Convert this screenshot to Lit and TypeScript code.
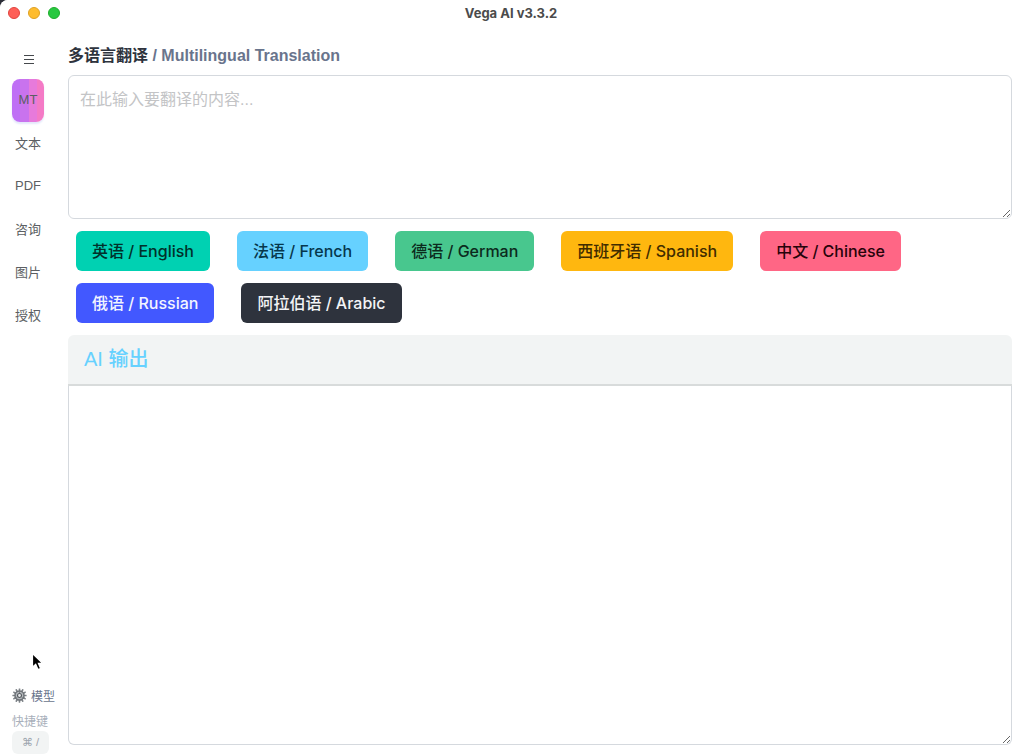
import { LitElement, html, css, svg } from "lit";
import { customElement, property, state } from "lit/decorators.js";
import { classMap } from "lit/directives/class-map.js";

interface Language {
  label: string;
  tone: string;
}

const LANGUAGES: Language[] = [
  { label: "英语 / English", tone: "primary" },
  { label: "法语 / French", tone: "info" },
  { label: "德语 / German", tone: "success" },
  { label: "西班牙语 / Spanish", tone: "warning" },
  { label: "中文 / Chinese", tone: "danger" },
  { label: "俄语 / Russian", tone: "link" },
  { label: "阿拉伯语 / Arabic", tone: "dark" },
];

const SECTIONS = ["MT", "文本", "PDF", "咨询", "图片", "授权"];

const TEETH = Array.from({ length: 12 }, (_, i) => i * 30);

@customElement("title-bar")
export class TitleBar extends LitElement {
  static styles = css`
    :host {
      display: grid;
      grid-template-columns: 1fr auto 1fr;
      align-items: center;
      height: 26px;
      padding-left: 8px;
      background: #fff;
    }
    .lights {
      display: flex;
      gap: 8px;
    }
    .light {
      box-sizing: border-box;
      width: 12px;
      height: 12px;
      padding: 0;
      border: 1px solid;
      border-radius: 50%;
    }
    .close {
      background: #fe5f57;
      border-color: #e0443e;
    }
    .minimize {
      background: #febc2e;
      border-color: #dea123;
    }
    .zoom {
      background: #28c840;
      border-color: #1dad2b;
    }
    .title {
      margin: 0;
      font: 700 13px/16px Inter, sans-serif;
      color: #4b4b4b;
    }
  `;

  @property() heading = "";

  render() {
    return html`
      <div class="lights">
        <button class="light close" aria-label="Close"></button>
        <button class="light minimize" aria-label="Minimize"></button>
        <button class="light zoom" aria-label="Zoom"></button>
      </div>
      <h1 class="title">${this.heading}</h1>
    `;
  }
}

@customElement("side-nav")
export class SideNav extends LitElement {
  static styles = css`
    :host {
      display: flex;
      flex-direction: column;
      justify-content: space-between;
      width: 56px;
      box-sizing: border-box;
      padding: 12px 0 0 12px;
      font-size: 13px;
      color: #5c5f63;
    }
    .items {
      display: flex;
      flex-direction: column;
      align-items: flex-start;
    }
    .item {
      width: 32px;
      height: 43px;
      padding: 0 0 2px;
      border: 0;
      border-radius: 8px;
      background: none;
      font: inherit;
      color: inherit;
      white-space: nowrap;
      cursor: pointer;
    }
    .toggle {
      display: grid;
      place-items: center;
      width: 34px;
      height: 41px;
      padding: 0;
      border: 0;
      background: none;
    }
    .active {
      background: linear-gradient(
        90deg,
        #bf6ff5 0 25%,
        #c973ee 25% 53%,
        #e77adb 53% 78%,
        #f47ac6 78%
      );
      box-shadow: 0 2px 2px #e4e7fb;
    }
    .footer {
      display: flex;
      flex-direction: column;
      align-items: flex-start;
      font-size: 12px;
      white-space: nowrap;
    }
    .model {
      display: flex;
      align-items: center;
      gap: 4px;
      height: 24px;
      margin-bottom: 7px;
      color: #69748c;
      text-decoration: none;
    }
    .caption {
      line-height: 17px;
      color: #a9b0bb;
    }
    .keys {
      box-sizing: border-box;
      height: 23px;
      padding: 0 10px;
      border-radius: 6px;
      background: #f2f4f4;
      color: #9da4ae;
      font: 11px/23px "Liberation Sans", "DejaVu Sans", sans-serif;
    }
  `;

  @state() private selected = "MT";

  render() {
    return html`
      <nav class="items">
        <button class="toggle" aria-label="菜单">
          <svg width="12" height="12" viewBox="0 0 12 12" aria-hidden="true">
            <path d="M1 2.5h10M1 6.5h10M1 10.5h10" stroke="#45484c" stroke-width="1.2" />
          </svg>
        </button>
        ${SECTIONS.map(
          (name) => html`<button
            class=${classMap({ item: true, active: name === this.selected })}
            @click=${() => (this.selected = name)}
          >
            ${name}
          </button>`
        )}
      </nav>
      <div class="footer">
        <a class="model" href="#model">
          <svg width="15" height="15" viewBox="-8 -8 16 16" aria-hidden="true">
            ${TEETH.map(
              (a) => svg`<rect x="-.9" y="-7.6" width="1.8" height="3" rx=".4" fill="#7d8287" transform="rotate(${a})" />`
            )}
            <circle r="4.8" fill="#b4b8bc" stroke="#6c7176" stroke-width="1.6" />
            <circle r="2.1" fill="#e8eaec" stroke="#53585d" stroke-width="1.2" />
            <path d="M2 1.5L4 3M-2 1.5L-4 3M0-2.4V-4.6" stroke="#6c7176" stroke-width=".8" />
          </svg>
          <span>模型</span>
        </a>
        <span class="caption">快捷键</span>
        <kbd class="keys">⌘ /</kbd>
      </div>
    `;
  }
}

@customElement("translate-panel")
export class TranslatePanel extends LitElement {
  static styles = css`
    :host {
      display: flex;
      flex-direction: column;
      min-width: 0;
      padding: 18px 2px 9px 0;
    }
    .heading {
      display: block;
      margin-bottom: 7px;
      font-size: 16px;
      line-height: 24px;
      font-weight: 700;
      color: #2e333d;
    }
    .sub {
      color: #69748c;
    }
    .area {
      display: block;
      box-sizing: border-box;
      width: 100%;
      margin: 0;
      padding: 12px 11px;
      border: 1px solid #d5d9de;
      border-radius: 6px;
      outline: none;
      background: #fff;
      font: inherit;
      font-size: 16px;
      line-height: 24px;
      color: #2e333d;
      resize: vertical;
    }
    .area::placeholder {
      color: #c3c4c6;
      opacity: 1;
    }
    .input {
      height: 144px;
    }
    .languages {
      display: flex;
      flex-wrap: wrap;
      gap: 12px 27px;
      padding: 12px 8px;
    }
    .language {
      height: 40px;
      padding: 0 16px 1px;
      border: 0;
      border-radius: 6px;
      font: 500 16px/24px Inter, "Noto Sans CJK SC", sans-serif;
      cursor: pointer;
    }
    .primary {
      background: #00d1b2;
      color: #00302a;
    }
    .info {
      background: #66d1ff;
      color: #06374c;
    }
    .success {
      background: #48c78e;
      color: #0c2a1d;
    }
    .warning {
      background: #ffb70f;
      color: #402c00;
    }
    .danger {
      background: #ff6685;
      color: #26030a;
    }
    .link {
      background: #4258ff;
      color: #f2f4ff;
    }
    .dark {
      background: #2e333d;
      color: #f3f4f6;
    }
    .output-title {
      display: block;
      padding: 9px 16px 10px;
      border-bottom: 2px solid #d8dbdb;
      border-radius: 6px 6px 0 0;
      background: #f2f4f4;
      font-size: 20px;
      line-height: 30px;
      font-weight: 500;
      color: #66d1ff;
    }
    .output {
      flex: 1;
      min-height: 120px;
      border-top: 0;
      border-radius: 0 0 6px 6px;
    }
  `;

  render() {
    return html`
      <label class="heading" for="source">
        多语言翻译 <span class="sub">/ Multilingual Translation</span>
      </label>
      <textarea id="source" class="area input" placeholder="在此输入要翻译的内容..."></textarea>
      <div class="languages">
        ${LANGUAGES.map((l) => html`<button class="language ${l.tone}">${l.label}</button>`)}
      </div>
      <label class="output-title" for="result">AI 输出</label>
      <textarea id="result" class="area output" readonly></textarea>
    `;
  }
}

@customElement("app-root")
export class AppRoot extends LitElement {
  static styles = css`
    :host {
      display: block;
      background: #2b2e38;
      font-family: "Liberation Sans", "Noto Sans CJK SC", sans-serif;
    }
    .window {
      position: relative;
      display: grid;
      grid-template-rows: auto 1fr;
      min-height: 100vh;
      border-top-left-radius: 8px;
      overflow: hidden;
      background: #fff;
    }
    .body {
      display: grid;
      grid-template-columns: auto 1fr;
      gap: 12px;
    }
    .pointer {
      position: absolute;
      left: 31px;
      bottom: 82px;
      pointer-events: none;
    }
  `;

  render() {
    return html`
      <div class="window">
        <title-bar heading="Vega AI v3.3.2"></title-bar>
        <div class="body">
          <side-nav></side-nav>
          <translate-panel></translate-panel>
        </div>
        <svg class="pointer" width="14" height="20" viewBox="0 0 14 20" aria-hidden="true">
          <path
            d="M1.5 1.5V15.2L4.7 12.3L7 17.6L9.6 16.5L7.4 11.3H11.6Z"
            fill="#000"
            stroke="#fff"
            stroke-width="1.2"
          />
        </svg>
      </div>
    `;
  }
}
